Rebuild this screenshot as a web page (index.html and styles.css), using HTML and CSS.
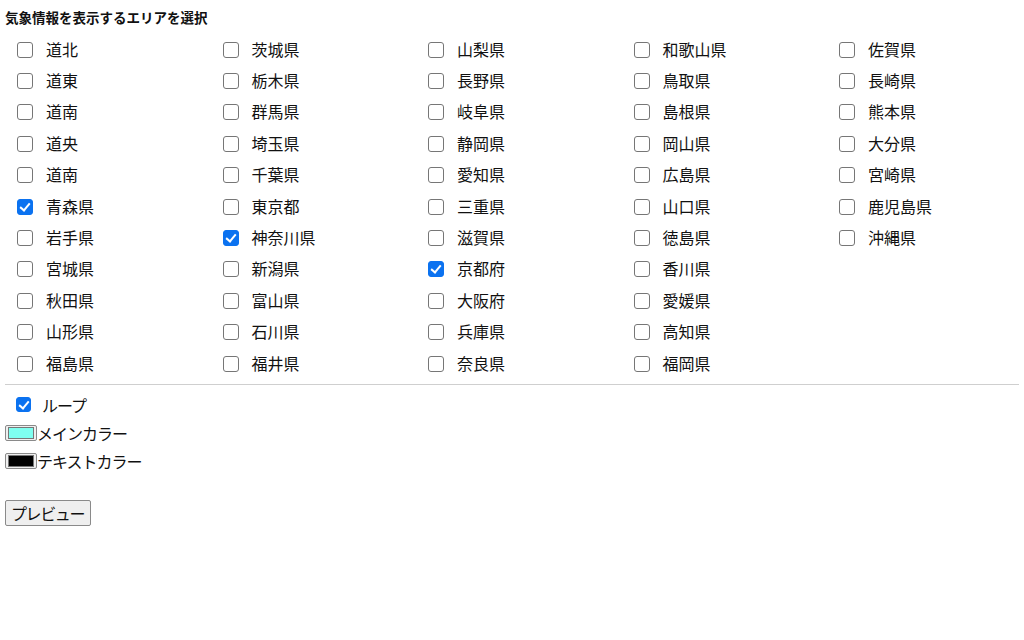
FILE: index.html
```html
<!DOCTYPE html>
<html lang="ja">
<head>
<meta charset="utf-8">
<title>エリア選択</title>
<link rel="stylesheet" href="styles.css">
</head>
<body>
<div class="title">気象情報を表示するエリアを選択</div>
<div class="grid">
<label class="item"><input type="checkbox" class="cb"><span>道北</span></label>
<label class="item"><input type="checkbox" class="cb"><span>道東</span></label>
<label class="item"><input type="checkbox" class="cb"><span>道南</span></label>
<label class="item"><input type="checkbox" class="cb"><span>道央</span></label>
<label class="item"><input type="checkbox" class="cb"><span>道南</span></label>
<label class="item"><input type="checkbox" class="cb" checked><span>青森県</span></label>
<label class="item"><input type="checkbox" class="cb"><span>岩手県</span></label>
<label class="item"><input type="checkbox" class="cb"><span>宮城県</span></label>
<label class="item"><input type="checkbox" class="cb"><span>秋田県</span></label>
<label class="item"><input type="checkbox" class="cb"><span>山形県</span></label>
<label class="item"><input type="checkbox" class="cb"><span>福島県</span></label>
<label class="item"><input type="checkbox" class="cb"><span>茨城県</span></label>
<label class="item"><input type="checkbox" class="cb"><span>栃木県</span></label>
<label class="item"><input type="checkbox" class="cb"><span>群馬県</span></label>
<label class="item"><input type="checkbox" class="cb"><span>埼玉県</span></label>
<label class="item"><input type="checkbox" class="cb"><span>千葉県</span></label>
<label class="item"><input type="checkbox" class="cb"><span>東京都</span></label>
<label class="item"><input type="checkbox" class="cb" checked><span>神奈川県</span></label>
<label class="item"><input type="checkbox" class="cb"><span>新潟県</span></label>
<label class="item"><input type="checkbox" class="cb"><span>富山県</span></label>
<label class="item"><input type="checkbox" class="cb"><span>石川県</span></label>
<label class="item"><input type="checkbox" class="cb"><span>福井県</span></label>
<label class="item"><input type="checkbox" class="cb"><span>山梨県</span></label>
<label class="item"><input type="checkbox" class="cb"><span>長野県</span></label>
<label class="item"><input type="checkbox" class="cb"><span>岐阜県</span></label>
<label class="item"><input type="checkbox" class="cb"><span>静岡県</span></label>
<label class="item"><input type="checkbox" class="cb"><span>愛知県</span></label>
<label class="item"><input type="checkbox" class="cb"><span>三重県</span></label>
<label class="item"><input type="checkbox" class="cb"><span>滋賀県</span></label>
<label class="item"><input type="checkbox" class="cb" checked><span>京都府</span></label>
<label class="item"><input type="checkbox" class="cb"><span>大阪府</span></label>
<label class="item"><input type="checkbox" class="cb"><span>兵庫県</span></label>
<label class="item"><input type="checkbox" class="cb"><span>奈良県</span></label>
<label class="item"><input type="checkbox" class="cb"><span>和歌山県</span></label>
<label class="item"><input type="checkbox" class="cb"><span>鳥取県</span></label>
<label class="item"><input type="checkbox" class="cb"><span>島根県</span></label>
<label class="item"><input type="checkbox" class="cb"><span>岡山県</span></label>
<label class="item"><input type="checkbox" class="cb"><span>広島県</span></label>
<label class="item"><input type="checkbox" class="cb"><span>山口県</span></label>
<label class="item"><input type="checkbox" class="cb"><span>徳島県</span></label>
<label class="item"><input type="checkbox" class="cb"><span>香川県</span></label>
<label class="item"><input type="checkbox" class="cb"><span>愛媛県</span></label>
<label class="item"><input type="checkbox" class="cb"><span>高知県</span></label>
<label class="item"><input type="checkbox" class="cb"><span>福岡県</span></label>
<label class="item"><input type="checkbox" class="cb"><span>佐賀県</span></label>
<label class="item"><input type="checkbox" class="cb"><span>長崎県</span></label>
<label class="item"><input type="checkbox" class="cb"><span>熊本県</span></label>
<label class="item"><input type="checkbox" class="cb"><span>大分県</span></label>
<label class="item"><input type="checkbox" class="cb"><span>宮崎県</span></label>
<label class="item"><input type="checkbox" class="cb"><span>鹿児島県</span></label>
<label class="item"><input type="checkbox" class="cb"><span>沖縄県</span></label>
</div>
<hr class="sep">
<label class="loop"><input type="checkbox" class="cb" checked><span class="kana">ループ</span></label>
<label class="color-row"><input type="color" value="#7ffff0"><span class="kana">メインカラー</span></label>
<label class="color-row"><input type="color" value="#000000"><span class="kana">テキストカラー</span></label>
<div class="actions"><button type="button" class="preview">プレビュー</button></div>
</body>
</html>
```
FILE: styles.css
```css
html, body {
  background: #fff;
}
body {
  margin: 0;
  padding: 0 5px;
  font-family: "Noto Sans CJK JP", "Noto Sans", sans-serif;
  color: #111;
  font-size: 16px;
}
.title {
  font-size: 13.5px;
  font-weight: bold;
  line-height: 20px;
  margin: 7px 0 6px;
}
.grid {
  display: grid;
  grid-auto-flow: column;
  grid-template-rows: repeat(11, 31.4px);
  grid-template-columns: repeat(4, 205.5px) 1fr;
  padding-left: 12px;
}
.item {
  display: flex;
  align-items: center;
  line-height: 20px;
}
.cb {
  -webkit-appearance: none;
  appearance: none;
  position: relative;
  box-sizing: border-box;
  width: 16px;
  height: 16px;
  margin: 2px 13px 0 0;
  border: 1.5px solid #767676;
  border-radius: 3px;
  background: #fff;
  flex: none;
}
.cb:checked {
  background: #0b72f0;
  border-color: #0b72f0;
}
.cb:checked::after {
  content: "";
  position: absolute;
  left: 4px;
  top: 1px;
  width: 4px;
  height: 8px;
  border: solid #fff;
  border-width: 0 2.5px 2.5px 0;
  transform: rotate(40deg);
}
.sep {
  border: none;
  border-top: 1px solid #cfcfcf;
  height: 0;
  margin: 6px 0 0;
}
.loop {
  display: flex;
  align-items: center;
  box-sizing: border-box;
  height: 33px;
  padding: 6px 0 0 11px;
}
.loop .cb {
  width: 15px;
  height: 15px;
  margin: 0 11px 0 0;
}
.loop .cb:checked::after {
  left: 3.5px;
  top: 0.5px;
}
.kana {
  letter-spacing: -1px;
}
.color-row {
  display: flex;
  align-items: center;
  height: 28.6px;
}
.color-row input {
  -webkit-appearance: none;
  appearance: none;
  width: 32px;
  height: 16px;
  padding: 1px 2px;
  margin: 0;
  border: 1px solid #8a8a8a;
  border-radius: 2px;
  background: #efefef;
  box-sizing: border-box;
}
.color-row input::-webkit-color-swatch-wrapper {
  padding: 0;
}
.color-row input::-webkit-color-swatch {
  border: 1px solid #777;
  border-radius: 0;
}
.actions {
  margin-top: 25px;
}
.preview {
  font-family: "Noto Sans CJK JP", "Noto Sans", sans-serif;
  font-size: 16px;
  letter-spacing: -1.4px;
  line-height: 22px;
  padding: 1px 6px 1px 5px;
  border: 1px solid #8a8a8a;
  border-radius: 2px;
  background: #efefef;
  color: #111;
}
```
